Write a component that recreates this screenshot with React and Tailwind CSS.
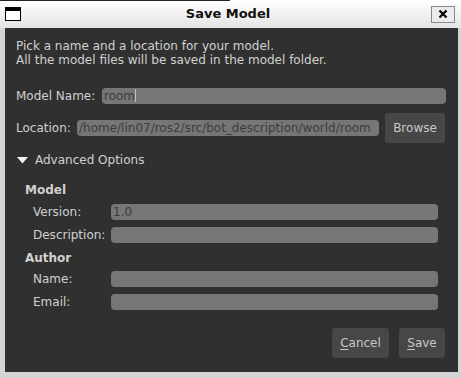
import React from "react";

const font = { fontFamily: '"DejaVu Sans", Verdana, sans-serif' };

const Field = ({ value, className = "" }) => (
  <div
    className={`h-[16px] rounded-[4px] bg-[#767676] text-[#3c3c3c] text-[12px] leading-[16px] px-[2px] overflow-hidden whitespace-nowrap ${className}`}
  >
    {value}
  </div>
);

const SubRow = ({ label, value, mt }) => (
  <div className={`flex items-center h-[16px] ${mt}`}>
    <span className="w-[78px] shrink-0 pl-[17px] box-content">{label}</span>
    <Field value={value} className="flex-1" />
  </div>
);

const DialogButton = ({ mnemonic, rest, width }) => (
  <button
    type="button"
    className={`h-[30px] ${width} rounded-[3px] bg-[#474747] text-[#c8c8c8] text-[12px]`}
  >
    <span className="underline underline-offset-[2px]">{mnemonic}</span>
    {rest}
  </button>
);

export default function App() {
  return (
    <div
      className="w-[461px] h-[378px] bg-[#d4d4d4] flex flex-col overflow-hidden"
      style={font}
    >
      {/* title bar */}
      <div className="relative h-[28px] shrink-0 bg-gradient-to-b from-white to-[#e4e4e4] flex items-center">
        <div className="absolute top-0 left-0 w-[230px] h-px bg-[#222]" />
        <div className="ml-[5px] w-[16px] h-[14px] border border-black bg-white">
          <div className="h-[3px] bg-black" />
        </div>
        <div className="flex-1 text-center text-[13px] font-bold text-[#111] pl-[4px]">
          Save Model
        </div>
        <div className="mr-[6px] w-[24px] h-[17px] border border-[#8a8a8a] bg-[#ececec] flex items-center justify-center">
          <svg width="10" height="10" viewBox="0 0 10 10">
            <path d="M1.5 1.5 L8.5 8.5 M8.5 1.5 L1.5 8.5" stroke="#000" strokeWidth="2.2" />
          </svg>
        </div>
      </div>

      {/* dialog body */}
      <div className="ml-[5px] mr-[3px] h-[344px] bg-[#303030] text-[#d0d0d0] text-[12px] pl-[11px] pr-[12px] pt-[11px] flex flex-col">
        <div className="leading-[14px]">
          <p>Pick a name and a location for your model.</p>
          <p>All the model files will be saved in the model folder.</p>
        </div>

        <div className="flex items-center h-[16px] mt-[21px]">
          <span className="w-[86px] shrink-0">Model Name:</span>
          <Field
            className="flex-1"
            value={
              <>
                room
                <span className="inline-block w-px h-[13px] bg-[#c0c0c0] align-[-2px]" />
              </>
            }
          />
        </div>

        <div className="flex items-center h-[30px] mt-[9px]">
          <span className="w-[61px] shrink-0">Location:</span>
          <Field value="/home/lin07/ros2/src/bot_description/world/room" className="w-[302px]" />
          <button
            type="button"
            className="ml-[6px] w-[60px] h-[30px] rounded-[3px] bg-[#474747] text-[#c8c8c8] text-[12px]"
          >
            Browse
          </button>
        </div>

        <div className="flex items-center h-[16px] mt-[9px]">
          <svg width="11" height="7" viewBox="0 0 11 7" className="ml-[1px]">
            <path d="M0 0 H11 L5.5 6.5 Z" fill="#f2f2f2" />
          </svg>
          <span className="ml-[7px]">Advanced Options</span>
        </div>

        <div className="pr-[8px] flex flex-col">
          <div className="h-[16px] mt-[14px] pl-[9px] font-bold leading-[16px]">Model</div>
          <SubRow label="Version:" value="1.0" mt="mt-[6px]" />
          <SubRow label="Description:" value="" mt="mt-[7px]" />
          <div className="h-[16px] mt-[7px] pl-[9px] font-bold leading-[16px]">Author</div>
          <SubRow label="Name:" value="" mt="mt-[5px]" />
          <SubRow label="Email:" value="" mt="mt-[7px]" />
        </div>

        <div className="flex justify-end gap-[10px] mt-[18px] pr-[1px]">
          <DialogButton mnemonic="C" rest="ancel" width="w-[57px]" />
          <DialogButton mnemonic="S" rest="ave" width="w-[46px]" />
        </div>
      </div>
    </div>
  );
}
